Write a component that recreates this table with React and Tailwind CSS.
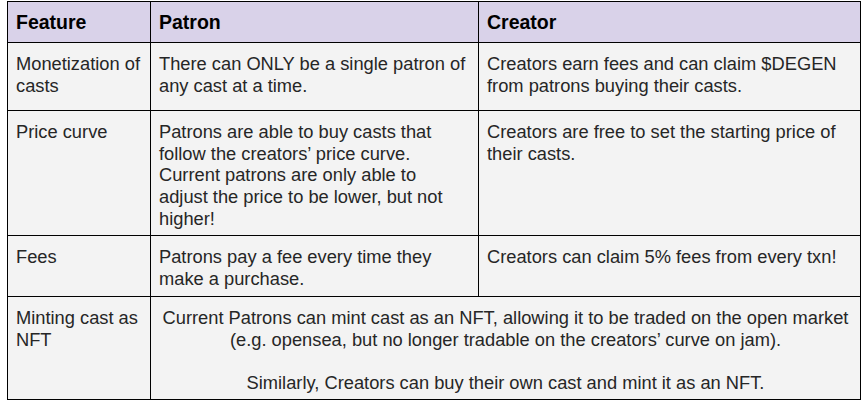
const rows = [
  {
    feature: 'Monetization of casts',
    patron: 'There can ONLY be a single patron of any cast at a time.',
    creator: 'Creators earn fees and can claim $DEGEN from patrons buying their casts.',
    h: 'h-[67px]',
  },
  {
    feature: 'Price curve',
    patron: (
      <>
        Patrons are able to buy casts that follow the creators&#8217; price curve. Current patrons are only able to
        <br />
        adjust the price to be lower, but not higher!
      </>
    ),
    creator: 'Creators are free to set the starting price of their casts.',
    h: 'h-[124px]',
  },
  {
    feature: 'Fees',
    patron: 'Patrons pay a fee every time they make a purchase.',
    creator: 'Creators can claim 5% fees from every txn!',
    h: 'h-[60px]',
  },
];

const Cell = ({ children, className = '' }) => (
  <div className={`bg-[#f3f3f3] px-2 pt-[10px] text-[18.3px] leading-[21.67px] text-[#262626] ${className}`}>
    {children}
  </div>
);

export default function App() {
  return (
    <div className="min-h-screen bg-white pl-[7px] pt-[1px] font-['Liberation_Sans',Arial,sans-serif]">
      <div className="grid w-[854px] grid-cols-[142px_327px_381px] gap-px border border-black bg-black">
        {/* ヘッダー */}
        {['Feature', 'Patron', 'Creator'].map((t) => (
          <div
            key={t}
            className="h-[40px] bg-[#d9d2e9] px-2 pt-[9px] text-[19.5px] font-bold leading-[23px] text-black"
          >
            {t}
          </div>
        ))}

        {rows.map((r, i) => (
          <div key={i} className="contents">
            <Cell className={r.h}>{r.feature}</Cell>
            <Cell className={r.h}>{r.patron}</Cell>
            <Cell className={r.h}>{r.creator}</Cell>
          </div>
        ))}

        {/* NFT行 */}
        <Cell className="h-[102px]">Minting cast as NFT</Cell>
        <Cell className="col-span-2 h-[102px] text-center">
          <p>
            Current Patrons can mint cast as an NFT, allowing it to be traded on the open market
            <br />
            (e.g. opensea, but no longer tradable on the creators&#8217; curve on jam).
          </p>
          <p className="mt-[21.67px]">Similarly, Creators can buy their own cast and mint it as an NFT.</p>
        </Cell>
      </div>
    </div>
  );
}
